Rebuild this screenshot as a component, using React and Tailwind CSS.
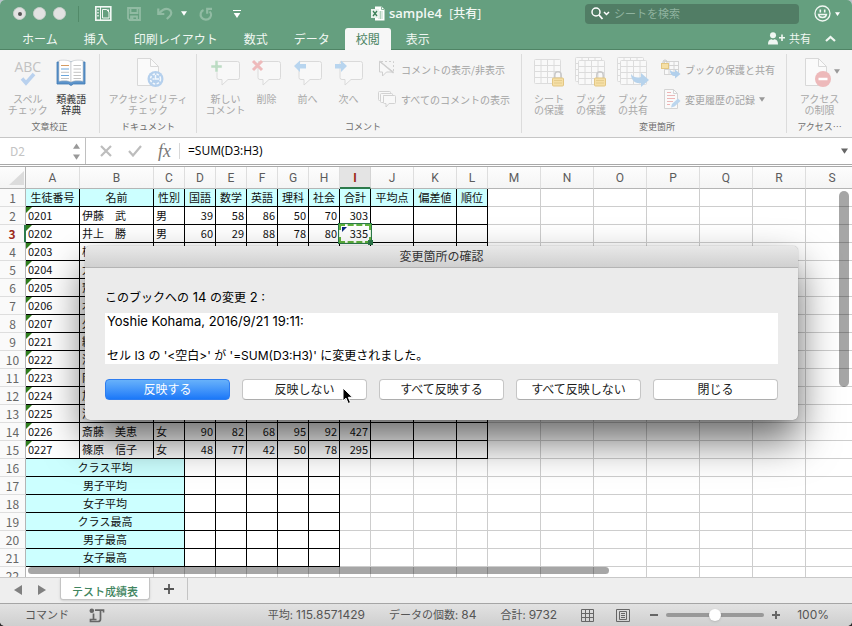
import React, { useState } from 'react';
import { clsx } from 'clsx';

const COLUMNS = [
  { id: 'A', width: 54 },
  { id: 'B', width: 74 },
  { id: 'C', width: 31 },
  { id: 'D', width: 31 },
  { id: 'E', width: 31 },
  { id: 'F', width: 31 },
  { id: 'G', width: 31 },
  { id: 'H', width: 31 },
  { id: 'I', width: 31 },
  { id: 'J', width: 43 },
  { id: 'K', width: 43 },
  { id: 'L', width: 31 },
  { id: 'M', width: 53 },
  { id: 'N', width: 53 },
  { id: 'O', width: 53 },
  { id: 'P', width: 53 },
  { id: 'Q', width: 53 },
  { id: 'R', width: 53 },
  { id: 'S', width: null },
];

const HEADINGS = ['生徒番号', '名前', '性別', '国語', '数学', '英語', '理科', '社会', '合計', '平均点', '偏差値', '順位'];

const STUDENTS = [
  ['0201', '伊藤　武', '男', 39, 58, 86, 50, 70, 303],
  ['0202', '井上　勝', '男', 60, 29, 88, 78, 80, 335],
  ['0203', '柿沼'],
  ['0204', '大木'],
  ['0205', '齋藤'],
  ['0206', '木村'],
  ['0207', '久保'],
  ['0221', '織田'],
  ['0222', '浅野'],
  ['0223', '岡田'],
  ['0224', '加藤'],
  ['0225', '河合'],
  ['0226', '斎藤　美恵', '女', 90, 82, 68, 95, 92, 427],
  ['0227', '篠原　信子', '女', 48, 77, 42, 50, 78, 295],
];

const SUMMARY = ['クラス平均', '男子平均', '女子平均', 'クラス最高', '男子最高', '女子最高'];

const MENU_TABS = ['ホーム', '挿入', '印刷レイアウト', '数式', 'データ', '校閲', '表示'];

/* ---------- icons ---------- */

function Caret({ className }) {
  return <svg viewBox="0 0 8 6" className={className} fill="currentColor"><path d="M0 0h8L4 6z" /></svg>;
}

function SidebarIcon() {
  return (
    <svg width="17" height="15" viewBox="0 0 17 15" fill="none" stroke="#f2f8f4" strokeWidth="1.6">
      <rect x="0.8" y="0.8" width="15" height="13.4" />
      <path d="M5.5 1v13" strokeWidth="1" />
      <path d="M3 3v1.5M3 6v1.5M3 9v1.5" strokeWidth="1.4" />
      <path d="M7.5 3.5h4l2.5 2.5v6h-6.500z" strokeWidth="1" />
      <path d="M11 3.500h3v3z" fill="#f2f8f4" stroke="none" />
    </svg>
  );
}

function SaveIcon() {
  return (
    <svg width="14" height="14" viewBox="0 0 14 14" fill="none" stroke="#91bba3" strokeWidth="1.8">
      <path d="M1 1h12v12H2.500L1 11.500z" />
      <path d="M3.500 1v5h7V1" />
      <path d="M4 13V9.500h6V13" />
      <path d="M5.500 10v3" />
    </svg>
  );
}

function UndoIcon() {
  return (
    <svg width="16" height="13" viewBox="0 0 16 13" fill="none" stroke="#91bba3" strokeWidth="2.2">
      <path d="M1.300 1.500V7h6" />
      <path d="M2 6.500C5 3 8.500 1.200 11.500 2.200c3.300 1.200 3.500 4.800 1.200 7L9.800 12" />
    </svg>
  );
}

function RedoIcon() {
  return (
    <svg width="14" height="14" viewBox="0 0 14 14" fill="none" stroke="#91bba3" strokeWidth="2.2">
      <path d="M4.500 3C1.500 4.200.8 8 2.500 10.500c2 2.700 6.300 2.800 8.500.2 1.600-2 1.300-4.700-.5-6.200" />
      <path d="M13 1.800H8.200v5" />
    </svg>
  );
}

function WorkbookIcon() {
  return (
    <svg width="14" height="15" viewBox="0 0 14 15">
      <path d="M4 .5h6.500l3 3v11H4z" fill="#fff" />
      <path d="M10.500.5v3h3" fill="none" stroke="#8ab79c" />
      <path d="M7 6h5M7 8h5M7 10h5M7 12h5M9.500 5v8" stroke="#9cc5ac" strokeWidth=".7" />
      <rect x="0" y="3" width="8" height="9" fill="#e9f3ec" />
      <path d="M2 5l4 5M6 5l-4 5" stroke="#3c7f58" strokeWidth="1.300" />
    </svg>
  );
}

function SearchIcon() {
  return (
    <svg width="19" height="13" viewBox="0 0 19 13" fill="none" stroke="#fff" strokeWidth="1.500">
      <circle cx="5" cy="5" r="4" />
      <path d="M8 8l3.500 4" strokeWidth="1.800" />
      <path d="M13 5l2.500 2.500L18 5" />
    </svg>
  );
}

function SmileyIcon() {
  return (
    <svg width="17" height="17" viewBox="0 0 17 17" fill="none" stroke="#f0f7f2" strokeWidth="1.300">
      <circle cx="8.500" cy="8.500" r="7.500" />
      <path d="M6.300 4.500v3M10.700 4.500v3" strokeWidth="1.600" />
      <path d="M4.500 9.500c.8 4 7.200 4 8 0z" />
    </svg>
  );
}

function SharePersonIcon() {
  return (
    <svg width="17" height="13" viewBox="0 0 17 13" fill="#f0f7f2">
      <circle cx="5" cy="3.300" r="3" />
      <path d="M0 12.500c0-3.500 1-5 3.500-5.300L5 8l1.500-.8C9 7.500 10 9 10 12.500z" />
      <path d="M11 5h2.200V2.500h1.600V5H17v1.600h-2.200V9h-1.600V6.600H11z" />
    </svg>
  );
}

function SpellIcon() {
  return (
    <svg width="32" height="32" viewBox="0 0 32 32">
      <path d="M10 21.500l4 4.500 8-9" fill="none" stroke="#b9d1ee" strokeWidth="3.500" />
    </svg>
  );
}

function ThesaurusIcon() {
  return (
    <svg width="32" height="32" viewBox="0 0 32 32">
      <path d="M2 5h28v22H18.500L16 28.500 13.500 27H2z" fill="#5b93cb" stroke="#3f78b3" strokeWidth=".8" />
      <path d="M4 3.500c5-.8 10-.3 12 1.500v20c-3-1.500-7-1.500-12-.8z" fill="#fff" stroke="#b8bdc2" strokeWidth=".6" />
      <path d="M28 3.500c-5-.8-10-.3-12 1.500v20c3-1.500 7-1.500 12-.8z" fill="#fff" stroke="#b8bdc2" strokeWidth=".6" />
      <path d="M6 8.500h8" stroke="#d59b62" strokeWidth="1.200" />
      <path d="M6 12h8M6 18.500h8" stroke="#6ba6dc" strokeWidth="1.200" />
      <path d="M6 15.300h8M6 21.500h8M18.500 8.500h7.500M18.500 12h7.500M18.500 15.300h7.500M18.500 18.500h7.500M18.500 21.500h7.500" stroke="#c4c4c4" />
    </svg>
  );
}

function PageShape() {
  return (
    <>
      <path d="M5.500 1.500h13l8 8v19h-21z" fill="#fafafa" stroke="#d8d8d8" />
      <path d="M18.500 1.500v8h8" fill="none" stroke="#d8d8d8" />
    </>
  );
}

function AccessibilityIcon() {
  return (
    <svg width="32" height="32" viewBox="0 0 32 32">
      <PageShape />
      <circle cx="23.500" cy="22" r="8" fill="#b5d0ed" />
      <circle cx="23.500" cy="22" r="5" fill="none" stroke="#f3f8fd" strokeWidth="1.500" strokeDasharray="2.500 1.500" />
      <path d="M23.500 18v4h3.500M20.500 22h2" fill="none" stroke="#f3f8fd" strokeWidth="1.500" />
    </svg>
  );
}

function BubbleIcon({ kind }) {
  return (
    <svg width="32" height="32" viewBox="0 0 32 32">
      <path d="M7.500 4.500h20q2 0 2 2v14q0 2-2 2H18L12 28v-5.500H9q-2 0-2-2v-14q0-2 2-2z" fill="#f8f8f8" stroke="#dadada" />
      {kind === 'new' && <path d="M1 8h4V3.500h3V8h4v3H8v4H5v-4H1z" fill="#bcdcc3" stroke="#f5f5f5" strokeWidth=".5" />}
      {kind === 'delete' && <path d="M2 4l9 9M11 4l-9 9" stroke="#eebabb" strokeWidth="3" />}
      {kind === 'prev' && <path d="M2 9l6-5.500V7h6v4.500H8V15z" fill="#b8d5ef" />}
      {kind === 'next' && <path d="M14 9L8 3.500V7H2v4.500h6V15z" fill="#b8d5ef" />}
    </svg>
  );
}

function ToggleCommentIcon() {
  return (
    <svg width="18" height="18" viewBox="0 0 18 18" fill="#f8f8f8" stroke="#cfcfcf">
      <path d="M1.500 1.500v10.500h3V16l4-4h7z" />
      <path d="M3 1.500h12.500V12" strokeDasharray="2 2" fill="none" />
      <path d="M1.500 1l14 12" strokeWidth="1.300" />
    </svg>
  );
}

function AllCommentsIcon() {
  return (
    <svg width="18" height="18" viewBox="0 0 18 18" fill="#f8f8f8" stroke="#d2d2d2">
      <rect x="0.500" y="1.500" width="12" height="9" rx="1" />
      <rect x="2.500" y="3.500" width="12" height="9" rx="1" />
      <path d="M5.500 5.500h11q1 0 1 1v6q0 1-1 1H11L8 17v-3.500H6.500q-1 0-1-1v-6q0-1 1-1z" />
    </svg>
  );
}

function GridShape({ x, y }) {
  return (
    <g transform={`translate(${x} ${y})`} stroke="#dcdcdc">
      <rect x=".5" y=".5" width="26" height="24" rx="1" fill="#f9f9f9" />
      <path d="M.5 6.500h26M.5 12.500h26M.5 18.500h26M7 .5v24M13.500.5v24M20 .5v24" fill="none" />
    </g>
  );
}

function LockShape({ x, y }) {
  return (
    <g transform={`translate(${x} ${y})`}>
      <path d="M2.800 7V4a3.200 3.200 0 016.400 0v3" fill="none" stroke="#c9c9c9" strokeWidth="1.500" />
      <rect x=".5" y="7" width="11" height="8" rx="1" fill="#f5dfa6" stroke="#e3c682" />
      <path d="M2 9.500h8M2 12h8" stroke="#e5cc8c" />
    </g>
  );
}

function SheetIcon({ stacked, badge }) {
  return (
    <svg width="34" height="32" viewBox="0 0 34 32">
      {stacked && <GridShape x={1} y={0} />}
      <GridShape x={stacked ? 4 : 2} y={stacked ? 3 : 2} />
      {badge === 'lock' ? <LockShape x={20} y={14} /> : <path d="M15 17c3 4 7 4 10 3v-4l8 7-8 7v-4c-6 1-10-3-10-9z" fill="#b7d3ec" />}
    </svg>
  );
}

function ProtectShareIcon() {
  return (
    <svg width="20" height="20" viewBox="0 0 20 20">
      <g stroke="#d4d4d4" fill="#f9f9f9">
        <rect x="3.500" y="2.500" width="14" height="13" />
        <path d="M3.500 6.500h14M3.500 10.500h14M8 2.500v13M13 2.500v13" />
      </g>
      <path d="M2 5V3a2 2 0 014 0v2" fill="none" stroke="#c9c9c9" />
      <rect x=".5" y="4.500" width="7" height="5" fill="#f5dfa6" stroke="#e3c682" />
      <path d="M9 11c2 2 4 2 5 2v-2.500l5.500 4.500-5.500 4.500V17c-3 0-5-2-5-6z" fill="#b2d0ec" />
    </svg>
  );
}

function TrackChangesIcon() {
  return (
    <svg width="20" height="20" viewBox="0 0 20 20">
      <path d="M3.500.5h9l4 4v15h-13z" fill="#fafafa" stroke="#d4d4d4" />
      <path d="M12.500.5v4h4" fill="none" stroke="#d4d4d4" />
      <path d="M6 3.500h4M6 9.500h8M6 15.500h3" stroke="#eeb5b5" />
      <path d="M6 6.500h8M6 12.500h6" stroke="#e9b9b9" />
      <path d="M10 18.500l1-3.500 6-5.500 2.500 2.500-6 5.500z" fill="#bcd6ee" />
    </svg>
  );
}

function RestrictIcon() {
  return (
    <svg width="32" height="32" viewBox="0 0 32 32">
      <g transform="translate(-4 0)"><PageShape /></g>
      <circle cx="19" cy="22" r="8" fill="#edb9ba" />
      <path d="M14.500 22h9" stroke="#fff" strokeWidth="2.600" />
    </svg>
  );
}

function ScriptIcon() {
  return (
    <svg width="16" height="15" viewBox="0 0 16 15" fill="none" stroke="#666" strokeWidth="1.700">
      <circle cx="2.800" cy="2.800" r="2.300" fill="#666" stroke="none" />
      <path d="M6 2.200h8.500V4.500M11.500 2.500V11q0 2.500-2.500 2.500H1.500V11.500h6" />
      <path d="M4.500 5.500v6" />
    </svg>
  );
}

/* ---------- window chrome ---------- */

function TitleBar() {
  return (
    <div className="grid h-[27px] grid-cols-[1fr_auto_1fr] items-center">
      <div className="flex items-center pl-[13px]">
        <div className="flex gap-[7px]">
          {['close', 'minimize', 'zoom'].map(name => (
            <button key={name} aria-label={name} className="flex size-[13px] items-center justify-center rounded-full border border-[#c8cfca] bg-[#e2e2e2]">
              {name === 'close' && <span className="size-1 rounded-full bg-[#555]" />}
            </button>
          ))}
        </div>
        <span className="ml-3 h-4 w-px bg-[#528a69]" />
        <button aria-label="サイドバー" className="ml-4"><SidebarIcon /></button>
        <button aria-label="保存" className="ml-[15px]"><SaveIcon /></button>
        <button aria-label="元に戻す" className="ml-4 flex items-center gap-2">
          <UndoIcon />
          <Caret className="h-[5px] w-[6px] text-white" />
        </button>
        <button aria-label="やり直し" className="ml-3"><RedoIcon /></button>
        <button aria-label="カスタマイズ" className="ml-5 flex flex-col items-center gap-0.5">
          <span className="h-px w-2 bg-white" />
          <Caret className="h-[5px] w-2 text-white" />
        </button>
      </div>
      <h1 className="flex items-center gap-1 font-[Open_Sans,Noto_Sans_CJK_JP,sans-serif] text-[13px] font-semibold whitespace-pre text-[#f2f8f4]">
        <WorkbookIcon />sample4 <span className="text-[12px] font-medium">[共有]</span>
      </h1>
      <div className="flex items-center justify-end pr-3">
        <label className="flex h-5 w-[214px] items-center gap-1 rounded-sm bg-[#517d65] pl-1.5">
          <SearchIcon />
          <input aria-label="シートを検索" placeholder="シートを検索" className="w-40 bg-transparent text-[11px] outline-none placeholder:text-[#8fb39f]" />
        </label>
        <button aria-label="フィードバック" className="ml-[15px] flex items-center gap-1">
          <SmileyIcon />
          <Caret className="h-1 w-[5px] text-white" />
        </button>
      </div>
    </div>
  );
}

function MenuTabs({ active, onSelect }) {
  return (
    <div className="flex h-[23px] items-stretch border-b border-[#4f8465] pl-[11px]">
      <nav className="flex gap-1 pt-px">
        {MENU_TABS.map(tab => (
          <button
            key={tab}
            onClick={() => onSelect(tab)}
            className={clsx('-mb-px rounded-t-[3px] px-[11px] text-[12px] leading-5', tab === active ? 'bg-[#f7f7f7] text-[#4a8362]' : 'text-[#f0f7f2]')}
          >
            {tab}
          </button>
        ))}
      </nav>
      <button className="ml-auto flex items-center gap-1 text-[11px] leading-4 text-[#f0f7f2]"><SharePersonIcon />共有</button>
      <button aria-label="リボンを閉じる" className="mr-4 ml-[14px]">
        <svg width="11" height="7" viewBox="0 0 11 7" fill="none" stroke="#f0f7f2" strokeWidth="2.200"><path d="M1 6l4.500-4L10 6" /></svg>
      </button>
    </div>
  );
}

function RibbonGroup({ label, className, children }) {
  return (
    <section className={clsx('flex shrink-0 flex-col justify-between', className)}>
      <div className="flex">{children}</div>
      <div className="text-center text-[9px] leading-3 whitespace-nowrap text-[#6e6e6e]">{label}</div>
    </section>
  );
}

function RibbonButton({ icon, lines, className, enabled }) {
  return (
    <button className={clsx('flex flex-col items-center gap-1 text-[10px] leading-[11px] whitespace-nowrap', enabled ? 'text-[#333]' : 'text-[#a8a8a8]', className)}>
      {icon}
      <span>{lines.map(line => <span key={line} className="block">{line}</span>)}</span>
    </button>
  );
}

function RibbonRow({ icon, label, menu }) {
  return (
    <button className="flex h-5 items-center gap-1 text-[10px] whitespace-nowrap text-[#a3a3a3]">
      <span className="flex w-5 justify-center">{icon}</span>
      {label}
      {menu && <Caret className="h-[5px] w-[6px] text-[#999]" />}
    </button>
  );
}

function Ribbon() {
  return (
    <div className="flex h-[88px] shrink-0 divide-x divide-[#dcdcdc] overflow-hidden border-b border-[#c6c6c6] bg-[#f5f5f5] py-1">
      <RibbonGroup label="文章校正" className="w-[100px] px-1.5 pt-[3px]">
        <RibbonButton
          className="w-11"
          lines={['スペル', 'チェック']}
          icon={(
            <span className="relative">
              <SpellIcon />
              <span className="absolute inset-x-0 top-1 text-center font-[Open_Sans,sans-serif] text-[14px] leading-3 font-medium text-[#c2c2c2]">ABC</span>
            </span>
          )}
        />
        <RibbonButton className="w-11" enabled lines={['類義語', '辞典']} icon={<ThesaurusIcon />} />
      </RibbonGroup>
      <RibbonGroup label="ドキュメント" className="w-[97px] pt-[3px]">
        <RibbonButton className="w-full" lines={['アクセシビリティ', 'チェック']} icon={<AccessibilityIcon />} />
      </RibbonGroup>
      <RibbonGroup label="コメント" className="w-[325px] pt-[3px] pl-2">
        <RibbonButton className="w-[41px]" lines={['新しい', 'コメント']} icon={<BubbleIcon kind="new" />} />
        <RibbonButton className="w-[41px]" lines={['削除']} icon={<BubbleIcon kind="delete" />} />
        <RibbonButton className="w-[41px]" lines={['前へ']} icon={<BubbleIcon kind="prev" />} />
        <RibbonButton className="w-[41px]" lines={['次へ']} icon={<BubbleIcon kind="next" />} />
        <div className="ml-2 flex flex-col gap-2.5 pt-0.5">
          <RibbonRow icon={<ToggleCommentIcon />} label="コメントの表示/非表示" />
          <RibbonRow icon={<AllCommentsIcon />} label="すべてのコメントの表示" />
        </div>
      </RibbonGroup>
      <RibbonGroup label="変更箇所" className="w-[265px] pt-[3px] pl-1.5">
        <RibbonButton className="w-[42px]" lines={['シート', 'の保護']} icon={<SheetIcon badge="lock" />} />
        <RibbonButton className="w-[42px]" lines={['ブック', 'の保護']} icon={<SheetIcon stacked badge="lock" />} />
        <RibbonButton className="w-[42px]" lines={['ブック', 'の共有']} icon={<SheetIcon stacked badge="arrow" />} />
        <div className="ml-[7px] flex flex-col gap-2.5 pt-0.5">
          <RibbonRow icon={<ProtectShareIcon />} label="ブックの保護と共有" />
          <RibbonRow icon={<TrackChangesIcon />} label="変更履歴の記録" menu />
        </div>
      </RibbonGroup>
      <RibbonGroup label="アクセス⋯" className="w-[65px] pt-[3px]">
        <RibbonButton
          className="w-full"
          lines={['アクセス', 'の制限']}
          icon={(
            <span className="relative">
              <RestrictIcon />
              <Caret className="absolute top-3 left-[30px] h-[5px] w-[6px] text-[#999]" />
            </span>
          )}
        />
      </RibbonGroup>
    </div>
  );
}

function FormulaBar() {
  return (
    <div className="flex h-[29px] shrink-0 items-center border-b-[3px] border-double border-[#a9a9a9] bg-white">
      <div className="flex h-full w-[86px] items-center justify-between border-r border-[#c0c0c0] pr-[5px] pl-2.5">
        <input aria-label="名前ボックス" defaultValue="D2" className="w-12 bg-transparent font-[Noto_Sans_CJK_JP,sans-serif] text-[12px] text-[#c4c4c4] outline-none" />
        <span className="flex flex-col gap-[5px] text-[#999]">
          <Caret className="h-1.5 w-[7px] rotate-180" />
          <Caret className="h-1.5 w-[7px]" />
        </span>
      </div>
      <button aria-label="キャンセル" className="ml-[14px]">
        <svg width="12" height="12" viewBox="0 0 12 12" stroke="#bdbdbd" strokeWidth="2.200"><path d="M1 1l10 10M11 1L1 11" /></svg>
      </button>
      <button aria-label="入力" className="ml-4">
        <svg width="14" height="12" viewBox="0 0 14 12" fill="none" stroke="#bdbdbd" strokeWidth="2.200"><path d="M1 6l4 4.500L13 1" /></svg>
      </button>
      <button aria-label="関数の挿入" className="ml-4 font-[Liberation_Serif,serif] text-[18px] leading-5 text-[#777] italic">fx</button>
      <span className="mx-2 h-4 w-px bg-[#d8d8d8]" />
      <input aria-label="数式バー" defaultValue="=SUM(D3:H3)" className="min-w-0 flex-1 bg-transparent font-[Open_Sans,sans-serif] text-[12px] font-medium text-black outline-none" />
      <button aria-label="数式バーを展開" className="mr-1"><Caret className="h-[6px] w-[7px] text-[#666]" /></button>
    </div>
  );
}

/* ---------- sheet ---------- */

const cell = 'h-[18px] overflow-hidden border-r border-b p-0 px-0.5 leading-[17px] whitespace-nowrap';
const inked = 'border-black';
const plain = 'border-[#cdcdcd]';

function RowHead({ n, active }) {
  return (
    <th scope="row" className={clsx('h-[18px] border-b border-b-[#dedede] bg-[#fafafa] p-0 text-center text-[12px] leading-[17px]', active ? 'border-r-2 border-r-[#2c7a4b] font-bold text-[#9c2a1a]' : 'border-r border-r-[#b5b5b5] font-normal text-[#666]')}>
      {n}
    </th>
  );
}

function EmptyCells({ from }) {
  return COLUMNS.slice(from).map(col => <td key={col.id} className={clsx(cell, plain)} />);
}

function StudentRow({ n, student }) {
  return (
    <tr>
      <RowHead n={n} active={n === 3} />
      {COLUMNS.slice(0, 12).map((col, i) => {
        const selected = n === 3 && col.id === 'I';
        return (
          <td key={col.id} className={clsx(cell, inked, i > 2 && 'text-right', (i === 0 || selected) && 'relative', selected && 'overflow-visible')}>
            {i === 0 && <span className="absolute top-0 left-0 size-[6px] bg-[#2f7d1d] [clip-path:polygon(0_0,100%_0,0_100%)]" />}
            {selected && (
              <>
                <span className="absolute -inset-0.5 border border-[#2c7a4b]" />
                <span className="absolute -inset-px border border-[#e4f4dc]" />
                <span className="absolute -inset-px border-2 border-dashed border-[#5fb33c]" />
                <span className="absolute top-0.5 left-0.5 size-[5px] bg-[#0a2a80] [clip-path:polygon(0_0,100%_0,0_100%)]" />
                <span className="absolute -right-[3px] -bottom-[3px] size-[5px] bg-[#2c7a4b]" />
              </>
            )}
            {student[i]}
          </td>
        );
      })}
      <EmptyCells from={12} />
    </tr>
  );
}

function Sheet() {
  return (
    <div className="relative min-h-0 flex-1 overflow-hidden bg-white">
      <table className="w-full min-w-[859px] table-fixed border-separate border-spacing-0 text-[11px] text-[#111]">
        <colgroup>
          <col style={{ width: 26 }} />
          {COLUMNS.map(col => <col key={col.id} style={col.width ? { width: col.width } : undefined} />)}
        </colgroup>
        <thead>
          <tr className="h-[22px] bg-linear-to-b from-[#fdfdfd] to-[#f4f4f4] font-[Roboto,sans-serif] text-[12px] text-[#5c5c5c]">
            <th className="border-r border-b border-[#b5b5b5] p-0">
              <svg width="16" height="16" viewBox="0 0 16 16" className="ml-auto"><path d="M15 1v14H0z" fill="#dcdcdc" /></svg>
            </th>
            {COLUMNS.map(col => (
              <th key={col.id} scope="col" className={clsx('border-r p-0', col.id === 'I' ? 'border-b-2 border-r-[#d4d4d4] border-b-[#2c7a4b] bg-[#e4e4e4] pt-px font-bold text-[#9c2a1a]' : 'border-b border-r-[#dedede] border-b-[#b5b5b5] font-normal')}>
                {col.id}
              </th>
            ))}
          </tr>
        </thead>
        <tbody>
          <tr>
            <RowHead n={1} />
            {HEADINGS.map(text => <td key={text} className={clsx(cell, inked, 'bg-[#ccffff] px-0 text-center')}>{text}</td>)}
            <EmptyCells from={12} />
          </tr>
          {STUDENTS.map((student, i) => <StudentRow key={student[0]} n={i + 2} student={student} />)}
          {SUMMARY.map((label, i) => (
            <tr key={label}>
              <RowHead n={i + 16} />
              <td colSpan={3} className={clsx(cell, inked, 'bg-[#ccffff] text-center')}>{label}</td>
              {COLUMNS.slice(3, 8).map(col => <td key={col.id} className={clsx(cell, inked)} />)}
              <EmptyCells from={8} />
            </tr>
          ))}
          <tr>
            <RowHead n={22} />
            <EmptyCells from={0} />
          </tr>
        </tbody>
      </table>
      <div className="absolute top-6 right-[3px] h-[196px] w-2.5 rounded-full bg-black/35" />
      <div className="absolute bottom-[3px] left-7 h-[7px] w-[581px] rounded-full bg-black/35" />
    </div>
  );
}

function SheetTabs() {
  return (
    <div className="flex h-[26px] shrink-0 items-start border-t border-[#c8c8c8] bg-[#eeeeee]">
      <div className="flex h-6 w-[60px] items-center justify-center gap-4 text-[#808080]">
        <button aria-label="前のシート"><svg width="8" height="10" viewBox="0 0 8 10" fill="currentColor"><path d="M8 0v10L0 5z" /></svg></button>
        <button aria-label="次のシート"><svg width="8" height="10" viewBox="0 0 8 10" fill="currentColor"><path d="M0 0v10l8-5z" /></svg></button>
      </div>
      <button className="h-[22px] w-[90px] rounded-b-[3px] border border-t-0 border-[#c4c4c4] bg-white pt-1 text-[11px] leading-4 font-medium text-[#3f8560] shadow-sm">テスト成績表</button>
      <button aria-label="シートを追加" className="flex h-[22px] w-[38px] items-center justify-center border-r border-[#c4c4c4]">
        <svg width="10" height="10" viewBox="0 0 10 10" stroke="#555" strokeWidth="1.800"><path d="M5 0v10M0 5h10" /></svg>
      </button>
    </div>
  );
}

function StatusBar() {
  const [zoom, setZoom] = useState(50);
  return (
    <footer className="flex h-[23px] shrink-0 items-center border-t border-[#a5a5a5] bg-linear-to-b from-[#e2e2e2] to-[#cfcfcf] pr-[23px] pl-[25px] font-[Inter,Noto_Sans_CJK_JP,sans-serif] text-[12px] whitespace-nowrap text-[#555]">
      <span className="text-[11px]">コマンド</span>
      <button aria-label="マクロの記録" className="ml-5"><ScriptIcon /></button>
      <span className="ml-auto"><span className="text-[11px]">平均: </span>115.8571429</span>
      <span className="ml-6"><span className="text-[11px]">データの個数: </span>84</span>
      <span className="ml-6"><span className="text-[11px]">合計: </span>9732</span>
      <button aria-label="標準表示" className="ml-6">
        <svg width="13" height="13" viewBox="0 0 13 13" fill="none" stroke="#666"><path d="M.5.5h12v12H.5zM4.500.5v12M8.500.5v12M.5 4.500h12M.5 8.500h12" /></svg>
      </button>
      <button aria-label="ページレイアウト" className="ml-[22px]">
        <svg width="14" height="13" viewBox="0 0 14 13" fill="none" stroke="#666"><path d="M.5.5h13v12H.5zM3.500 2.500h7v8h-7zM5 4.500h4M5 6.500h4M5 8.500h4" /></svg>
      </button>
      <span className="ml-5 h-0.5 w-2 bg-[#666]" />
      <input
        type="range"
        aria-label="ズーム"
        value={zoom}
        onChange={e => setZoom(e.target.value)}
        className="mx-2 h-1 w-[98px] appearance-none rounded-full bg-[#999] [&::-webkit-slider-thumb]:size-3 [&::-webkit-slider-thumb]:appearance-none [&::-webkit-slider-thumb]:rounded-full [&::-webkit-slider-thumb]:bg-white [&::-webkit-slider-thumb]:shadow"
      />
      <svg width="8" height="8" viewBox="0 0 8 8" stroke="#666" strokeWidth="2"><path d="M4 0v8M0 4h8" /></svg>
      <span className="ml-[17px]">100%</span>
    </footer>
  );
}

/* ---------- dialog ---------- */

function DialogButton({ primary, children }) {
  return (
    <button className={clsx('h-[21px] flex-1 rounded-[4px] border text-[12px] leading-[18px]', primary ? 'border-[#2d7df0] bg-linear-to-b from-[#67b1fa] to-[#1a78f8] text-white' : 'border-[#c6c6c6] border-b-[#adadad] bg-white text-[#1a1a1a]')}>
      {children}
    </button>
  );
}

function ReviewDialog() {
  return (
    <div role="dialog" aria-labelledby="dialog-title" className="absolute top-[246px] right-[54px] left-[85px] rounded-[5px] bg-[#ebebeb] font-[Inter,Noto_Sans_CJK_JP,sans-serif] text-[13px] text-black shadow-[0_20px_40px_rgba(0,0,0,0.6),0_0_1px_rgba(0,0,0,0.5)]">
      <h2 id="dialog-title" className="h-[22px] rounded-t-[5px] border-b border-[#b4b4b4] bg-linear-to-b from-[#e8e8e8] to-[#d0d0d0] text-center text-[12px] leading-[22px] text-[#333]">変更箇所の確認</h2>
      <div className="p-5">
        <p className="leading-[18px]"><span className="text-[12px]">このブックへの</span> 14 <span className="text-[12px]">の変更</span> 2 :</p>
        <div className="mt-1.5 h-[51px] bg-white px-0.5 leading-[17px]">
          <p>Yoshie Kohama, 2016/9/21 19:11:</p>
          <p className="mt-[17px] text-[12px]">セル I3 の '&lt;空白&gt;' が '=SUM(D3:H3)' に変更されました。</p>
        </div>
        <div className="mt-[15px] flex gap-3">
          <DialogButton primary>反映する</DialogButton>
          <DialogButton>反映しない</DialogButton>
          <DialogButton>すべて反映する</DialogButton>
          <DialogButton>すべて反映しない</DialogButton>
          <DialogButton>閉じる</DialogButton>
        </div>
      </div>
      <svg width="12" height="18" viewBox="0 0 12 18" className="absolute top-[141px] left-[257px]">
        <path d="M1 1v13l3-2.800 2.200 5.300 2.300-1L6.300 10.300h4.200z" fill="#000" stroke="#fff" />
      </svg>
    </div>
  );
}

export default function App() {
  const [activeTab, setActiveTab] = useState('校閲');

  return (
    <div className="h-screen bg-linear-to-b from-[#b9c3cc] to-[#2e2e2e] font-[Noto_Sans_CJK_JP,sans-serif]">
      <div className="relative flex h-full flex-col overflow-hidden rounded-[5px] bg-[#eee]">
        <header className="shrink-0 bg-[#659f7f]">
          <TitleBar />
          <MenuTabs active={activeTab} onSelect={setActiveTab} />
        </header>
        <Ribbon />
        <FormulaBar />
        <Sheet />
        <SheetTabs />
        <StatusBar />
        <ReviewDialog />
      </div>
    </div>
  );
}
